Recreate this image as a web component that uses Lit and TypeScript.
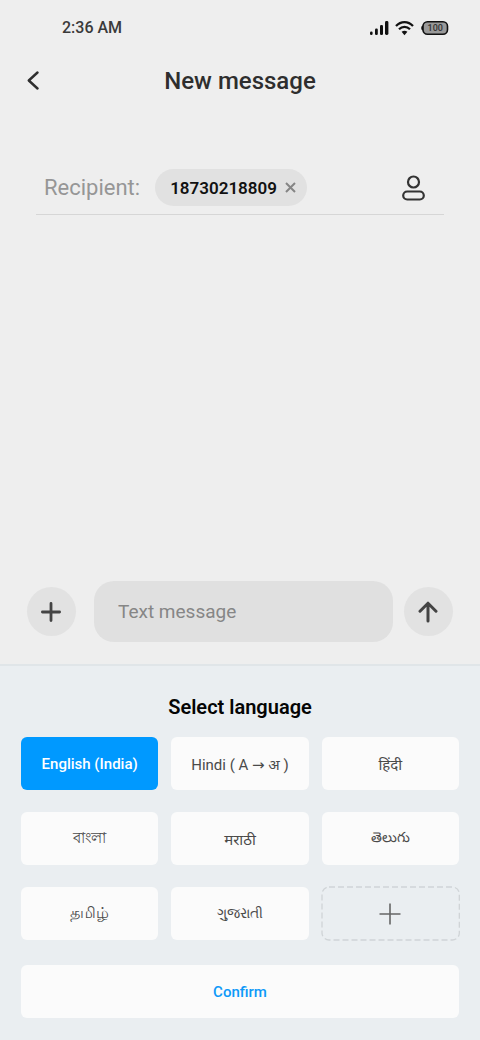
import { LitElement, html, css } from "lit";
import { customElement, state } from "lit/decorators.js";
import { classMap } from "lit/directives/class-map.js";

interface Language {
  label: string;
  lang: string;
}

const LANGUAGES: Language[] = [
  { label: "English (India)", lang: "en-IN" },
  { label: "Hindi ( A → अ )", lang: "en" },
  { label: "हिंदी", lang: "hi" },
  { label: "বাংলা", lang: "bn" },
  { label: "मराठी", lang: "mr" },
  { label: "తెలుగు", lang: "te" },
  { label: "தமிழ்", lang: "ta" },
  { label: "ગુજરાતી", lang: "gu" },
];

@customElement("status-bar")
class StatusBar extends LitElement {
  static styles = css`
    :host {
      display: flex;
      align-items: center;
      justify-content: space-between;
      height: 55px;
      padding: 0 31px 0 62px;
      font-size: 16px;
      font-weight: 500;
      color: #3a3a3a;
    }
    .icons {
      display: flex;
      align-items: center;
      gap: 6px;
    }
    svg {
      display: block;
    }
    .level {
      font-size: 9px;
      font-weight: 500;
    }
  `;

  render() {
    return html`
      <span>2:36 AM</span>
      <div class="icons">
        <svg width="19" height="16" viewBox="0 0 19 16" fill="#111">
          <rect x="0" y="11.500" width="2.600" height="3.500" rx="1.200" />
          <rect x="5" y="8.500" width="2.800" height="6.500" rx="1.200" />
          <rect x="10" y="5" width="3" height="10" rx="1.300" />
          <rect x="15" y="1" width="3.400" height="14" rx="1.400" />
        </svg>
        <svg width="19" height="16" viewBox="0 0 19 16" fill="none" stroke="#111" stroke-width="2.200">
          <path d="M1 6C5.800 0.700 13.200 0.700 18 6" />
          <path d="M4 9.300C7.200 6 11.800 6 15 9.300" />
          <path d="M6.600 11.800Q9.500 9.500 12.400 11.800L9.500 15.200Z" fill="#111" stroke="none" />
        </svg>
        <svg width="29" height="16" viewBox="0 0 29 16">
          <path d="M3 5.500C0.600 5.800 0.600 10.200 3 10.500Z" fill="#111" />
          <rect x="3" y="1.700" width="24.500" height="12.600" rx="4.500" fill="#999" stroke="#111" stroke-width="1.600" />
          <text class="level" x="15.200" y="11.300" text-anchor="middle" fill="#333">100</text>
        </svg>
      </div>
    `;
  }
}

@customElement("language-picker")
class LanguagePicker extends LitElement {
  @state() private selected = 0;

  static styles = css`
    :host {
      display: block;
      padding: 28px 21px 22px;
      border-top: 2px solid #e0e5e8;
      background: #eaeef1;
    }
    h2 {
      margin: 0 0 17px;
      font-size: 20px;
      line-height: 26px;
      font-weight: 600;
      text-align: center;
      color: #050505;
    }
    .grid {
      display: grid;
      grid-template-columns: repeat(3, 1fr);
      gap: 22px 13px;
    }
    button {
      display: flex;
      align-items: center;
      justify-content: center;
      height: 53px;
      padding: 0;
      border: 0;
      border-radius: 6px;
      background: #fbfbfb;
      color: #4a4a4a;
      font: inherit;
      font-size: 15px;
      white-space: pre;
      cursor: pointer;
    }
    button:lang(bn) {
      font-weight: 500;
    }
    button:lang(ta) {
      font-size: 16px;
      font-weight: 500;
    }
    button:lang(te),
    button:lang(gu) {
      font-size: 14px;
    }
    button.selected {
      background: #0099ff;
      color: #fff;
      font-weight: 500;
    }
    .add {
      display: grid;
      grid-template: 53px / 1fr;
      background: none;
    }
    .add svg {
      grid-area: 1 / 1;
      place-self: center;
    }
    .outline {
      width: 100%;
      height: 53px;
      overflow: visible;
    }
    .confirm {
      width: 100%;
      margin-top: 25px;
      color: #0d99f8;
      font-weight: 500;
    }
  `;

  render() {
    return html`
      <h2>Select language</h2>
      <div class="grid">
        ${LANGUAGES.map(
          (item, index) => html`<button
            type="button"
            lang=${item.lang}
            class=${classMap({ selected: index === this.selected })}
            @click=${() => (this.selected = index)}
          >${item.label}</button>`
        )}
        <button type="button" class="add" aria-label="Add language">
          <svg class="outline">
            <rect width="100%" height="100%" rx="7" fill="none" stroke="#d0d4d7" stroke-width="1.300" stroke-dasharray="6 3" />
          </svg>
          <svg width="22" height="22" viewBox="0 0 22 22" fill="none" stroke="#666" stroke-width="1.600">
            <path d="M11 0.500V21.500M0.500 11H21.500" />
          </svg>
        </button>
      </div>
      <button type="button" class="confirm">Confirm</button>
    `;
  }
}

@customElement("app-root")
class AppRoot extends LitElement {
  static styles = css`
    :host {
      display: flex;
      flex-direction: column;
      min-height: 100vh;
      background: #eeeeee;
      font-family: Roboto, "Noto Sans", "DejaVu Sans", sans-serif;
    }
    button {
      display: flex;
      align-items: center;
      justify-content: center;
      padding: 0;
      border: 0;
      background: none;
      font: inherit;
      cursor: pointer;
    }
    svg {
      display: block;
    }
    .title-bar {
      display: grid;
      grid-template-columns: 40px 1fr 40px;
      align-items: center;
      height: 52px;
      padding: 0 13px;
    }
    .back {
      height: 40px;
    }
    h1 {
      margin: 0;
      font-size: 24px;
      font-weight: 500;
      text-align: center;
      color: #2e2e2e;
    }
    .recipient {
      display: flex;
      align-items: center;
      gap: 15px;
      margin: 54px 36px 0;
      padding: 0 19px 0 8px;
      height: 53px;
      border-bottom: 1px solid #d6d6d6;
    }
    .label {
      font-size: 22px;
      color: #969696;
    }
    .chip {
      display: flex;
      align-items: center;
      gap: 8px;
      height: 37px;
      padding: 0 11px 0 15px;
      border-radius: 19px;
      background: #e1e1e1;
      font-size: 17px;
      font-weight: 600;
      color: #111;
    }
    .contacts {
      margin-left: auto;
    }
    .composer {
      display: flex;
      align-items: center;
      gap: 11px;
      margin: auto 27px 22px;
    }
    .round {
      flex: none;
      width: 49px;
      height: 49px;
      border-radius: 50%;
      background: #e2e2e2;
    }
    .attach {
      margin-right: 7px;
    }
    input {
      flex: 1;
      min-width: 0;
      box-sizing: border-box;
      height: 61px;
      padding: 0 24px;
      border: 0;
      border-radius: 20px;
      background: #e0e0e0;
      font: inherit;
      font-size: 19px;
      color: #333;
    }
    input::placeholder {
      color: #868686;
      opacity: 1;
    }
  `;

  render() {
    return html`
      <status-bar></status-bar>
      <header class="title-bar">
        <button type="button" class="back" aria-label="Back">
          <svg width="12" height="20" viewBox="0 0 12 20" fill="none" stroke="#2e2e2e" stroke-width="2.400" stroke-linecap="round" stroke-linejoin="round">
            <path d="M10.500 1.500L1.800 9.500L10.500 17.500" />
          </svg>
        </button>
        <h1>New message</h1>
      </header>
      <div class="recipient">
        <span class="label">Recipient:</span>
        <span class="chip">
          18730218809
          <button type="button" aria-label="Remove recipient">
            <svg width="11" height="11" viewBox="0 0 11 11" fill="none" stroke="#858585" stroke-width="2">
              <path d="M1 1L10 10M10 1L1 10" />
            </svg>
          </button>
        </span>
        <button type="button" class="contacts" aria-label="Choose contact">
          <svg width="23" height="26" viewBox="0 0 23 26" fill="none" stroke="#333" stroke-width="2.200">
            <circle cx="11.500" cy="7" r="5.500" />
            <rect x="1.200" y="16.500" width="20.600" height="8" rx="4" />
          </svg>
        </button>
      </div>
      <div class="composer">
        <button type="button" class="round attach" aria-label="Add attachment">
          <svg width="21" height="20" viewBox="0 0 21 20" fill="none" stroke="#444" stroke-width="2.800" stroke-linecap="round">
            <path d="M10 1.400V18.600M1.400 10H18.600" />
          </svg>
        </button>
        <input type="text" placeholder="Text message" aria-label="Text message" />
        <button type="button" class="round" aria-label="Send">
          <svg width="21" height="22" viewBox="0 0 21 22" fill="none" stroke="#444" stroke-width="3" stroke-linecap="round" stroke-linejoin="round">
            <path d="M10 20V2.200M2 10.200L10 2.200L18 10.200" />
          </svg>
        </button>
      </div>
      <language-picker></language-picker>
    `;
  }
}
